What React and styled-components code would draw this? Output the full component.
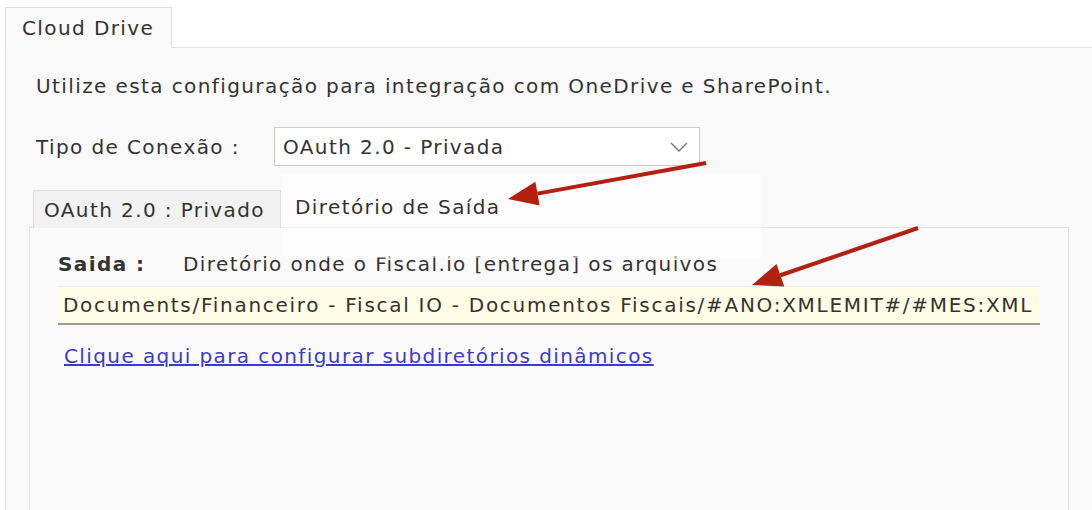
import React from "react";
import styled, { createGlobalStyle } from "styled-components";

const Global = createGlobalStyle`
  html, body { margin: 0; padding: 0; background: #ffffff; }
  body {
    font-family: "DejaVu Sans", Verdana, sans-serif;
    font-size: 20px;
    letter-spacing: 1.4px;
    color: #333333;
    overflow: hidden;
  }
`;

const Page = styled.div`
  position: relative;
  width: 1092px;
  height: 510px;
  overflow: hidden;
  padding: 7px 0 0 5px;
  box-sizing: border-box;
`;

const TabStrip = styled.div`
  display: flex;
  align-items: flex-end;
`;

const Tab = styled.div`
  box-sizing: border-box;
  width: ${(p) => p.$w}px;
  height: ${(p) => p.$h}px;
  padding: 0 0 0 ${(p) => p.$px}px;
  display: flex;
  align-items: center;
  background: ${(p) => p.$bg};
  border: 1px solid #dedede;
  border-bottom: none;
  color: #333;
  white-space: nowrap;
  margin-left: ${(p) => p.$ml || 0}px;
  margin-bottom: -1px;
  position: relative;
  z-index: 1;
`;

const Panel = styled.div`
  width: 1140px;
  height: 470px;
  box-sizing: border-box;
  background: #f9f9f9;
  border-top: 1px solid #e2e2e2;
  border-left: 1px solid #e2e2e2;
  padding: 26px 0 0 30px;
`;

const Intro = styled.p`
  margin: 0;
  line-height: 24px;
`;

const FieldRow = styled.div`
  display: flex;
  align-items: center;
  margin-top: 29px;
`;

const Label = styled.span`
  width: 238px;
`;

const Select = styled.div`
  box-sizing: border-box;
  width: 426px;
  height: 39px;
  background: #fff;
  border: 1px solid #cbcbcb;
  display: flex;
  align-items: center;
  justify-content: space-between;
  padding: 0 10px 0 8px;
`;

const SubArea = styled.div`
  margin: 24px 0 0 -7px;
`;

const SubPanel = styled.div`
  width: 1040px;
  height: 300px;
  box-sizing: border-box;
  background: #fafafa;
  border: 1px solid #e3e3e3;
  padding: 22px 0 0 28px;
`;

const OutRow = styled.div`
  display: flex;
  align-items: center;
  line-height: 28px;
`;

const OutLabel = styled.span`
  font-weight: bold;
  width: 125px;
`;

const PathInput = styled.div`
  box-sizing: border-box;
  width: 982px;
  height: 39px;
  margin-top: 8px;
  background: #fffde5;
  border-top: 1px solid #eeeeee;
  border-bottom: 2px solid #9a9a9a;
  display: flex;
  align-items: center;
  padding-left: 5px;
  letter-spacing: 1.72px;
  white-space: nowrap;
  overflow: hidden;
`;

const DynLink = styled.a`
  display: inline-block;
  margin: 19px 0 0 6px;
  color: #3a3ad0;
  text-decoration: underline;
`;

const Popup = styled.div`
  position: absolute;
  left: 281px;
  top: 174px;
  width: 481px;
  height: 84px;
  background: rgba(255, 255, 255, 0.5);
  box-sizing: border-box;
  padding: 21px 0 0 14px;
  letter-spacing: 1.4px;
  color: #333;
  z-index: 3;
`;

const Arrows = styled.svg`
  position: absolute;
  left: 0;
  top: 0;
  z-index: 4;
  pointer-events: none;
`;

const Chevron = () => (
  <svg width="20" height="12" viewBox="0 0 20 12">
    <path d="M2 2 L10 10 L18 2" fill="none" stroke="#777" strokeWidth="1.4" />
  </svg>
);

const Arrow = ({ x1, y1, x2, y2 }) => {
  const a = Math.atan2(y2 - y1, x2 - x1);
  const len = 30;
  const half = 12;
  const bx = x2 - len * Math.cos(a);
  const by = y2 - len * Math.sin(a);
  const nx = -Math.sin(a) * half;
  const ny = Math.cos(a) * half;
  return (
    <g fill="#b3200f" stroke="#b3200f">
      <line x1={x1} y1={y1} x2={bx} y2={by} strokeWidth="4" />
      <polygon
        points={`${x2},${y2} ${bx + nx},${by + ny} ${bx - nx},${by - ny}`}
        stroke="none"
      />
    </g>
  );
};

export default function App() {
  return (
    <>
      <Global />
      <Page>
        <TabStrip>
          <Tab $w={167} $h={41} $px={16} $bg="#f9f9f9">Cloud Drive</Tab>
        </TabStrip>
        <Panel>
          <Intro>Utilize esta configuração para integração com OneDrive e SharePoint.</Intro>
          <FieldRow>
            <Label>Tipo de Conexão :</Label>
            <Select>
              <span>OAuth 2.0 - Privada</span>
              <Chevron />
            </Select>
          </FieldRow>
          <SubArea>
            <TabStrip>
              <Tab $w={248} $h={38} $px={10} $bg="#f2f2f2" $ml={4}>OAuth 2.0 : Privado</Tab>
            </TabStrip>
            <SubPanel>
              <OutRow>
                <OutLabel>Saida :</OutLabel>
                <span>Diretório onde o Fiscal.io [entrega] os arquivos</span>
              </OutRow>
              <PathInput>
                Documents/Financeiro - Fiscal IO - Documentos Fiscais/#ANO:XMLEMIT#/#MES:XML
              </PathInput>
              <DynLink href="#">Clique aqui para configurar subdiretórios dinâmicos</DynLink>
            </SubPanel>
          </SubArea>
        </Panel>
        <Popup>Diretório de Saída</Popup>
        <Arrows width="1092" height="510">
          <Arrow x1={706} y1={163} x2={508} y2={199} />
          <Arrow x1={918} y1={228} x2={752} y2={285} />
        </Arrows>
      </Page>
    </>
  );
}
